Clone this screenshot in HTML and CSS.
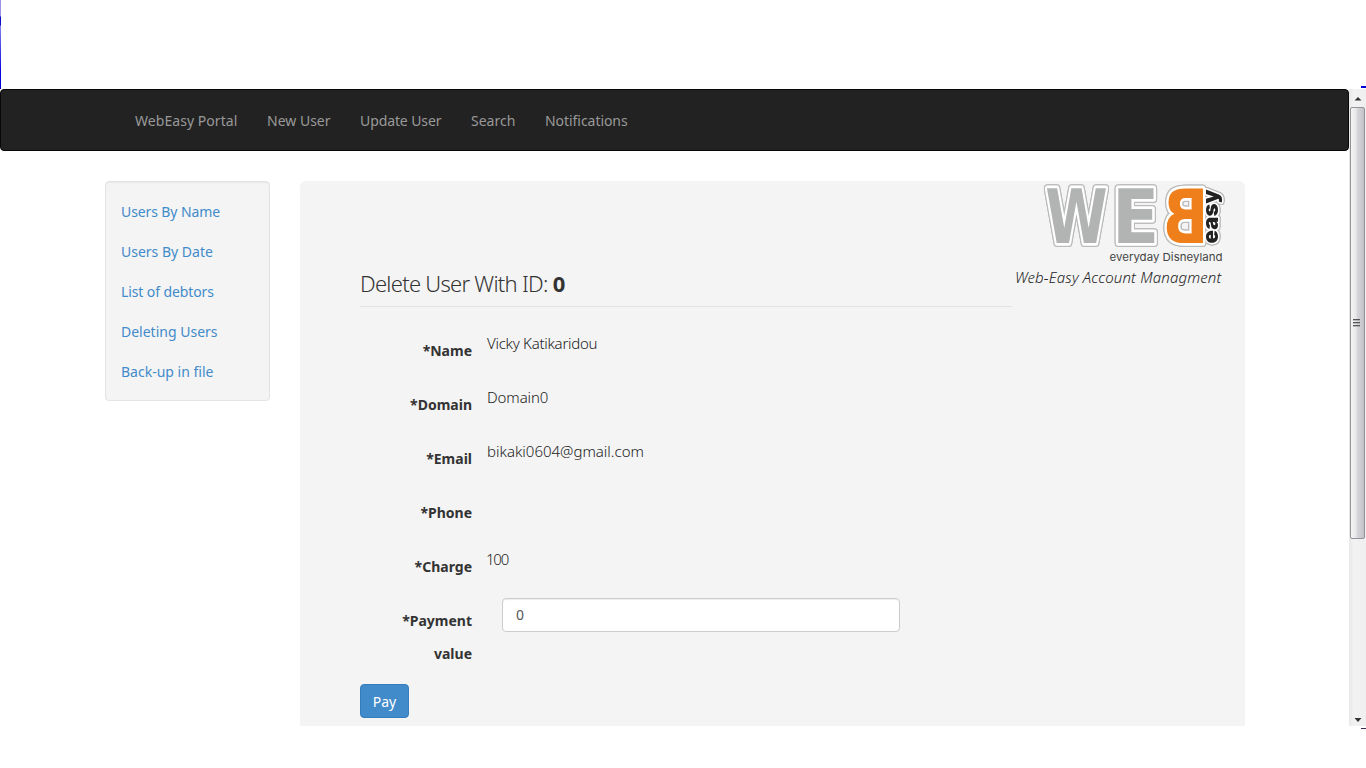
FILE: index.html
```html
<!DOCTYPE html>
<html lang="en">
<head>
<meta charset="utf-8">
<title>WebEasy Portal</title>
<link rel="stylesheet" href="styles.css">
</head>
<body>
<div class="edge"></div>
<div class="page">
  <main class="viewport">
    <nav class="navbar">
      <a class="n1">WebEasy Portal</a><a class="n2">New User</a><a class="n3">Update User</a><a class="n4">Search</a><a class="n5">Notifications</a>
    </nav>
    <div class="columns">
      <aside class="sidebar">
        <a class="tight">Users By Name</a><a>Users By Date</a><a class="tight">List of debtors</a><a>Deleting Users</a><a>Back-up in file</a>
      </aside>
      <section class="panel">
        <div class="form">
          <h1><span class="title">Delete User With ID:</span> <b>0</b></h1>
          <div class="row"><label>*Name</label><span class="value v1">Vicky Katikaridou</span></div>
          <div class="row"><label>*Domain</label><span class="value v2">Domain0</span></div>
          <div class="row"><label>*Email</label><span class="value v3">bikaki0604@gmail.com</span></div>
          <div class="row"><label>*Phone</label><span class="value"></span></div>
          <div class="row"><label>*Charge</label><span class="value v5">100</span></div>
          <div class="row payment"><label>*Payment<br>value</label><input type="text" value="0"></div>
          <button class="pay">Pay</button>
        </div>
        <div class="brand">
          <svg class="logo" width="220" height="86" viewBox="1010 181 220 86">
            <g class="letters">
              <text transform="translate(1045.200 242.700) scale(.76 1)" fill="#b2b4b3">W</text>
              <text transform="translate(1112 242.700) scale(.93 1)" fill="#b2b4b3">E</text>
              <text transform="translate(1208.500 242.700) scale(-.81 1)" fill="#ef7f1a">B</text>
              <text class="easy" transform="translate(1217.5 243.5) rotate(-90)" textLength="54" lengthAdjust="spacingAndGlyphs">easy</text>
            </g>
            <text class="tagline" x="1109.5" y="261" textLength="113" lengthAdjust="spacingAndGlyphs">everyday Disneyland</text>
          </svg>
          <p class="slogan">Web-Easy Account Managment</p>
        </div>
      </section>
    </div>
  </main>
  <div class="scrollbar">
    <svg width="17" height="637" viewBox="0 0 17 637">
      <defs><linearGradient id="thumb"><stop offset="0" stop-color="#f6f6f6"/><stop offset=".4" stop-color="#e7e7e9"/><stop offset=".5" stop-color="#d6d6da"/><stop offset="1" stop-color="#bfbfc5"/></linearGradient></defs>
      <path d="M5.500 11.500 9 8 12.500 11.500zM5.500 629h7l-3.500 4z" fill="#333"/>
      <rect x="1.500" y="18.500" width="14" height="431" rx="1.500" fill="url(#thumb)" stroke="#929297"/>
      <path d="M4 230.500h7M4 233.500h7M4 236.500h7" stroke="#555"/>
      <path d="M4 231.500h7M4 234.500h7M4 237.500h7" stroke="#999" opacity=".6"/>
    </svg>
  </div>
  <div class="mark top"></div>
  <div class="mark bottom"></div>
</div>
</body>
</html>
```
FILE: styles.css
```css
* { box-sizing: border-box; }
body { margin: 0; background: #fff; color: #333; font: 14px "Noto Sans", "Open Sans", sans-serif; height: 768px; overflow: hidden; }
.edge { width: 1px; height: 89px; background: linear-gradient(#9c94ea 0 16px, #0c0cc8 17px 25px, #8782ea 26px, #0909e6 70px, #0000d8); }
.page { display: flex; position: relative; height: 637px; }
.viewport { width: 1349px; overflow: hidden; }
.navbar { height: 62px; border: 1px solid #080808; border-radius: 4px; background: #222; display: flex; align-items: center; gap: 30px; padding-left: 134px; color: #999; white-space: nowrap; }
.navbar a { display: block; }
.n1 { width: 102px; letter-spacing: .05px; }
.n2 { width: 63px; }
.n3 { width: 81px; letter-spacing: -.1px; }
.n4 { width: 44px; }
.n5 { letter-spacing: -.05px; }
.columns { display: flex; gap: 30px; padding: 30px 0 0 105px; align-items: flex-start; }
.sidebar { width: 165px; height: 220px; border: 1px solid #e3e3e3; border-radius: 4px; background: #f4f4f4; box-shadow: inset 0 1px 1px rgba(0,0,0,.05); padding: 10px 15px; color: #428bca; }
.sidebar a { display: block; height: 40px; line-height: 40px; white-space: nowrap; }
.sidebar .tight { letter-spacing: -.1px; }
.panel { width: 945px; height: 560px; border-radius: 6px; background: #f4f4f4; display: flex; padding-left: 60px; }
.form { width: 652px; padding-top: 84px; }
h1 { margin: 0 0 20px; height: 42px; border-bottom: 1px solid #e3e3e3; font-size: 22px; font-weight: 300; line-height: 36px; white-space: nowrap; letter-spacing: -.73px; }
h1 b { font-weight: 700; }
.row { height: 54px; display: flex; }
label { width: 112px; padding-top: 7px; text-align: right; font-weight: 700; line-height: 33px; }
.value { margin-left: 15px; line-height: 33px; font-weight: 300; font-size: 15px; white-space: nowrap; color: #222; }
.v1 { letter-spacing: -.27px; }
.v2 { letter-spacing: -.1px; }
.v5 { letter-spacing: -1.2px; margin-left: 14px; }
.payment { height: 87px; }
.payment input { width: 398px; height: 34px; margin: 1px 0 0 30px; border: 1px solid #ccc; border-radius: 4px; padding: 5px 13px 7px; color: #555; font: 14px "Noto Sans", sans-serif; box-shadow: inset 0 1px 1px rgba(0,0,0,.075); }
.pay { display: block; width: 49px; height: 34px; border: 1px solid #357ebd; border-radius: 4px; background: #428bca; color: #fff; font: 14px "Noto Sans", sans-serif; padding: 0; }
.brand { width: 233px; }
.logo { display: block; margin-left: -2px; }
.letters text { font: 700 74.5px "DejaVu Sans", sans-serif; stroke: #fff; stroke-width: 5.5px; stroke-linejoin: round; paint-order: stroke; }
.letters { filter: drop-shadow(1px 0 0 #bbb) drop-shadow(-1px 0 0 #bbb) drop-shadow(0 1px 0 #bbb) drop-shadow(0 -1px 0 #bbb); }
.letters .easy { font: 900 21px "Inter", sans-serif; fill: #222; stroke-width: 3px; }
.tagline { font: 11px "Inter", sans-serif; fill: #444; }
.slogan { margin: -1px 0 0 3px; line-height: 22px; font-size: 15px; font-style: italic; font-weight: 300; white-space: nowrap; letter-spacing: .17px; color: #222; }
.scrollbar { width: 17px; background: linear-gradient(90deg, #e8e8e8, #f2f2f2 30%, #efefef); }
.scrollbar svg { display: block; }
.mark { position: absolute; right: 0; width: 5px; height: 2px; }
.top { top: -3px; background: #0000d8; }
.bottom { top: 639px; height: 1px; background: #392751; }
```
